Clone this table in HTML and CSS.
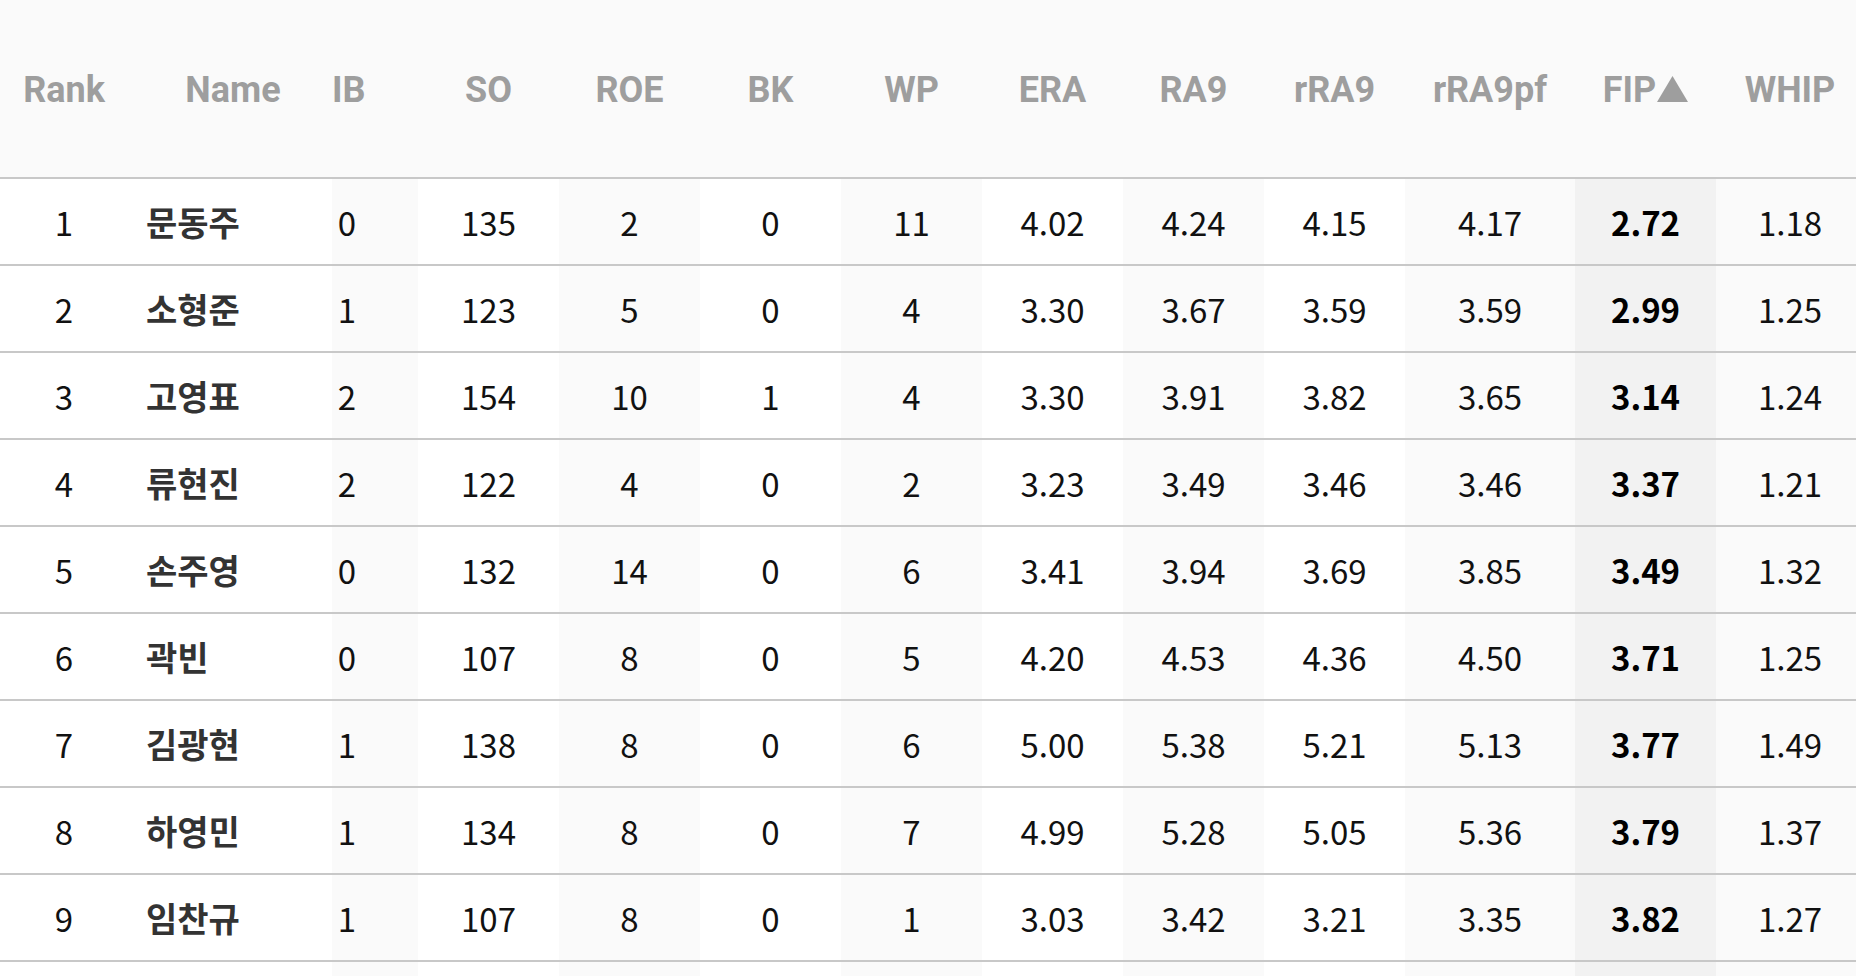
FILE: index.html
```html
<!DOCTYPE html>
<html lang="ko">
<head>
<meta charset="utf-8">
<title>FIP Ranking</title>
<link rel="stylesheet" href="styles.css">
</head>
<body>
<div class="wrap">
<table class="stats">
  <colgroup>
    <col class="c-rank"><col class="c-name"><col class="c-ib"><col class="c-std"><col class="c-std"><col class="c-std"><col class="c-std"><col class="c-std"><col class="c-std"><col class="c-std"><col class="c-wide"><col class="c-std"><col class="c-last">
  </colgroup>
  <thead>
    <tr>
      <th class="rank">Rank</th>
      <th class="name">Name</th>
      <th class="ib">IB</th>
      <th>SO</th>
      <th class="alt">ROE</th>
      <th>BK</th>
      <th class="alt">WP</th>
      <th>ERA</th>
      <th class="alt">RA9</th>
      <th>rRA9</th>
      <th class="alt">rRA9pf</th>
      <th class="sorted">FIP<svg class="arrow" width="31" height="26" viewBox="0 0 31 26" aria-hidden="true"><polygon points="15.5,0 31,26 0,26"/></svg></th>
      <th class="alt">WHIP</th>
    </tr>
  </thead>
  <tbody>
    <tr><td class="rank">1</td><td class="name">문동주</td><td class="ib">0</td><td>135</td><td class="alt">2</td><td>0</td><td class="alt">11</td><td>4.02</td><td class="alt">4.24</td><td>4.15</td><td class="alt">4.17</td><td class="sorted">2.72</td><td class="alt">1.18</td></tr>
    <tr><td class="rank">2</td><td class="name">소형준</td><td class="ib">1</td><td>123</td><td class="alt">5</td><td>0</td><td class="alt">4</td><td>3.30</td><td class="alt">3.67</td><td>3.59</td><td class="alt">3.59</td><td class="sorted">2.99</td><td class="alt">1.25</td></tr>
    <tr><td class="rank">3</td><td class="name">고영표</td><td class="ib">2</td><td>154</td><td class="alt">10</td><td>1</td><td class="alt">4</td><td>3.30</td><td class="alt">3.91</td><td>3.82</td><td class="alt">3.65</td><td class="sorted">3.14</td><td class="alt">1.24</td></tr>
    <tr><td class="rank">4</td><td class="name">류현진</td><td class="ib">2</td><td>122</td><td class="alt">4</td><td>0</td><td class="alt">2</td><td>3.23</td><td class="alt">3.49</td><td>3.46</td><td class="alt">3.46</td><td class="sorted">3.37</td><td class="alt">1.21</td></tr>
    <tr><td class="rank">5</td><td class="name">손주영</td><td class="ib">0</td><td>132</td><td class="alt">14</td><td>0</td><td class="alt">6</td><td>3.41</td><td class="alt">3.94</td><td>3.69</td><td class="alt">3.85</td><td class="sorted">3.49</td><td class="alt">1.32</td></tr>
    <tr><td class="rank">6</td><td class="name">곽빈</td><td class="ib">0</td><td>107</td><td class="alt">8</td><td>0</td><td class="alt">5</td><td>4.20</td><td class="alt">4.53</td><td>4.36</td><td class="alt">4.50</td><td class="sorted">3.71</td><td class="alt">1.25</td></tr>
    <tr><td class="rank">7</td><td class="name">김광현</td><td class="ib">1</td><td>138</td><td class="alt">8</td><td>0</td><td class="alt">6</td><td>5.00</td><td class="alt">5.38</td><td>5.21</td><td class="alt">5.13</td><td class="sorted">3.77</td><td class="alt">1.49</td></tr>
    <tr><td class="rank">8</td><td class="name">하영민</td><td class="ib">1</td><td>134</td><td class="alt">8</td><td>0</td><td class="alt">7</td><td>4.99</td><td class="alt">5.28</td><td>5.05</td><td class="alt">5.36</td><td class="sorted">3.79</td><td class="alt">1.37</td></tr>
    <tr><td class="rank">9</td><td class="name">임찬규</td><td class="ib">1</td><td>107</td><td class="alt">8</td><td>0</td><td class="alt">1</td><td>3.03</td><td class="alt">3.42</td><td>3.21</td><td class="alt">3.35</td><td class="sorted">3.82</td><td class="alt">1.27</td></tr>
    <tr><td class="rank"></td><td class="name"></td><td class="ib"></td><td></td><td class="alt"></td><td></td><td class="alt"></td><td></td><td class="alt"></td><td></td><td class="alt"></td><td class="sorted"></td><td class="alt"></td></tr>
  </tbody>
</table>
</div>
</body>
</html>
```

FILE: styles.css
```css
html, body {
  margin: 0;
  padding: 0;
  background: #ffffff;
}

body {
  overflow: hidden;
  font-family: "Noto Sans CJK KR", "Noto Sans", sans-serif;
}

.wrap {
  width: 1856px;
  height: 976px;
  overflow: hidden;
}

.stats {
  table-layout: fixed;
  border-collapse: collapse;
  border-spacing: 0;
  width: 1863px;
}

.c-rank { width: 128px; }
.c-name { width: 204px; }
.c-ib { width: 86px; }
.c-std { width: 141px; }
.c-wide { width: 170px; }
.c-last { width: 148px; }

.stats th {
  height: 175px;
  padding: 2px 0 0 0;
  background: #fafafa;
  color: #9e9e9e;
  font-family: Roboto, "Liberation Sans", sans-serif;
  font-weight: 700;
  font-size: 36px;
  text-align: center;
  vertical-align: middle;
  border-bottom: 2px solid #c8c8c8;
  white-space: nowrap;
}

.stats th .arrow {
  fill: #9e9e9e;
  vertical-align: baseline;
  margin-left: 1px;
}

.stats th.name {
  padding-left: 6px;
}

.stats td {
  height: 85px;
  padding: 0;
  color: #111111;
  font-size: 33px;
  font-weight: 400;
  text-align: center;
  vertical-align: middle;
  border-bottom: 2px solid #c8c8c8;
  background: #ffffff;
  white-space: nowrap;
}

.stats td.alt {
  background: #fafafa;
}

.stats td.sorted {
  background: #f2f2f2;
  font-weight: 700;
  color: #000000;
}

.stats td.ib {
  background: #fafafa;
  padding-right: 56px;
}

.stats th.ib {
  padding-right: 56px;
}

.stats td.name {
  text-align: left;
  padding-left: 18px;
  font-weight: 700;
  color: #333333;
  font-size: 34px;
}
```
